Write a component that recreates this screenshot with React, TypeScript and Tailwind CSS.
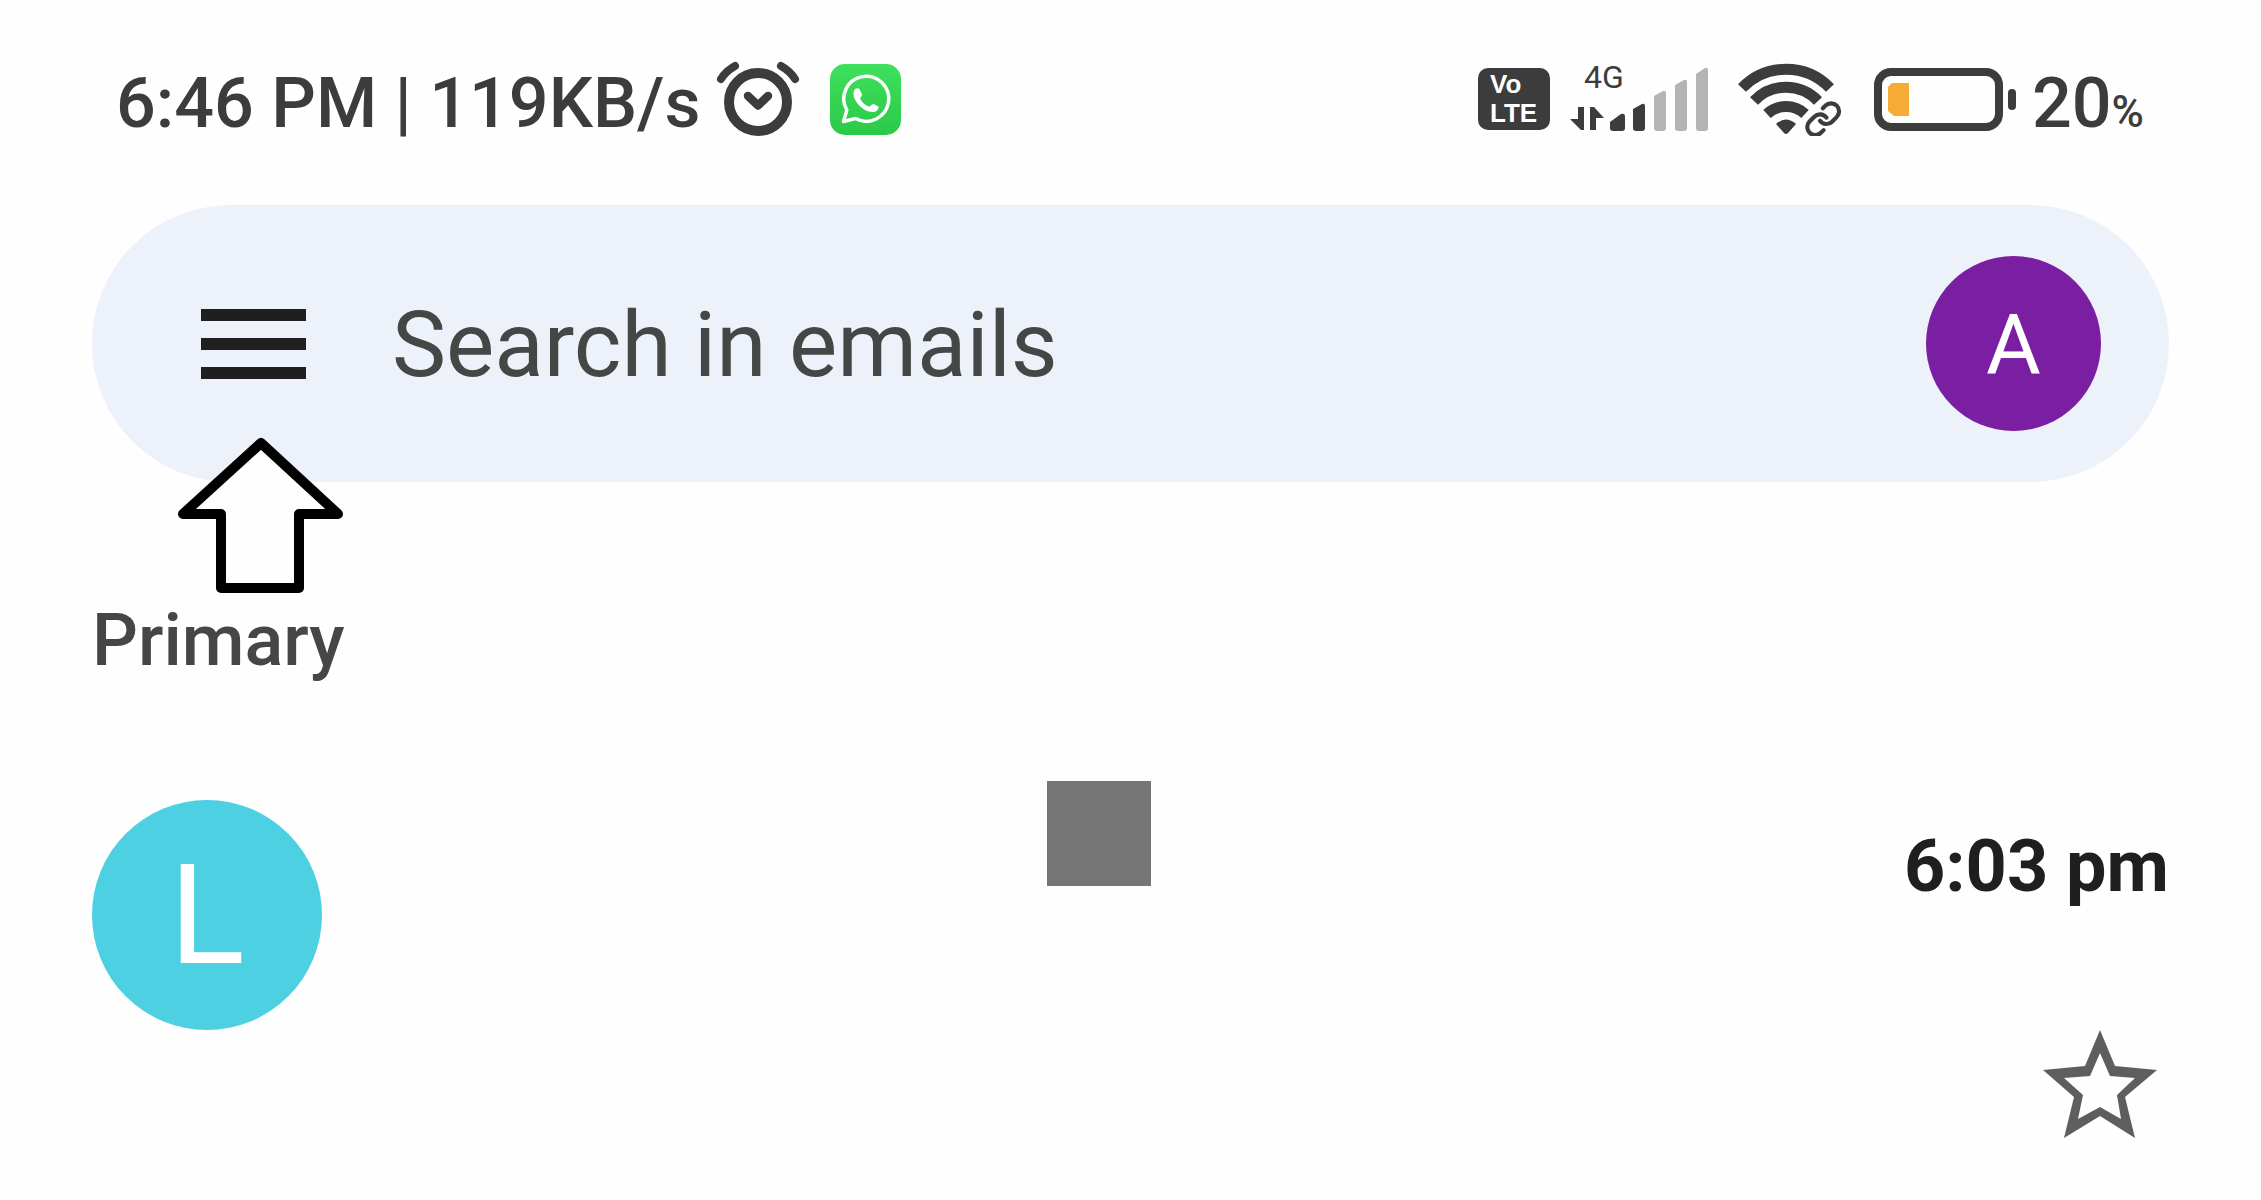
import React from 'react';

const AlarmIcon: React.FC = () => (
  <svg width="84" height="76" viewBox="0 0 84 76" fill="none" stroke="#3c3c3c" aria-hidden="true">
    <circle cx="42" cy="41" r="29" strokeWidth="10" />
    <path d="M32 35 L42 44.500 L52 35" strokeWidth="8.500" strokeLinecap="round" strokeLinejoin="round" />
    <path d="M5 18 Q10 10 19 5" strokeWidth="8" strokeLinecap="round" />
    <path d="M65 5 Q74 10 79 18" strokeWidth="8" strokeLinecap="round" />
  </svg>
);

const WhatsAppIcon: React.FC = () => (
  <svg width="71" height="71" viewBox="0 0 71 71" aria-hidden="true">
    <defs>
      <linearGradient id="wa" x1="0" y1="0" x2="0" y2="1">
        <stop offset="0" stopColor="#3ee05c" />
        <stop offset="1" stopColor="#2bc948" />
      </linearGradient>
    </defs>
    <rect width="71" height="71" rx="15" fill="url(#wa)" />
    <path
      d="M13.500 57.500 L16.800 46 A22.500 22.500 0 1 1 25.500 54.500 Z"
      fill="none"
      stroke="#fff"
      strokeWidth="3.500"
      strokeLinejoin="round"
    />
    <path
      d="M24 26.500 C25 24 28 23.500 29.500 25 L32 30.500 C32.500 32 30 33.500 30 34.500 C32 38.500 35 41 39 42.500 C40.500 42.500 42 39.500 43.500 40 L48.500 42.500 C49 46 46 48 42.500 48 C33 48 23 37 23.500 29 Z"
      fill="#fff"
    />
  </svg>
);

const SignalIcon: React.FC = () => (
  <svg width="140" height="64" viewBox="0 0 140 64" aria-hidden="true">
    <g fill="#3c3c3c">
      <path d="M8 40 H14 V63 H11 L0 52 H8 Z" />
      <path d="M20 63 V40 H24 L34 51 H26 V63 Z" />
      <path d="M40 55 L51 47 Q55 46 55 50 V61 Q55 64 52 64 H43 Q40 64 40 61 Z" />
      <path d="M63 42 L72 37 Q75 36 75 39 V61 Q75 64 72 64 H66 Q63 64 63 61 Z" />
    </g>
    <g fill="#b4b4b4">
      <path d="M84 29 L93 24 Q96 23 96 26 V61 Q96 64 93 64 H87 Q84 64 84 61 Z" />
      <path d="M105 18 L114 13 Q117 12 117 15 V61 Q117 64 114 64 H108 Q105 64 105 61 Z" />
      <path d="M126 7 L135 1 Q138 0 138 3 V61 Q138 64 135 64 H129 Q126 64 126 61 Z" />
    </g>
  </svg>
);

const WifiIcon: React.FC = () => (
  <svg width="104" height="74" viewBox="0 0 104 74" fill="none" stroke="#3c3c3c" aria-hidden="true">
    <g strokeWidth="11">
      <path d="M4 26 A61 61 0 0 1 92 26" />
      <path d="M16 39 A44 44 0 0 1 80 39" />
      <path d="M29 52 A28 28 0 0 1 67 52" />
    </g>
    <path d="M38 62 Q48 53 58 62 L50 71 Q48 73 46 71 Z" fill="#3c3c3c" stroke="none" />
    <g transform="translate(66 38) scale(1.6)" strokeWidth="2.600" strokeLinecap="round">
      <path d="M10 13a5 5 0 0 0 7.540.540l3-3a5 5 0 0 0-7.070-7.070l-1.720 1.710" />
      <path d="M14 11a5 5 0 0 0-7.540-.540l-3 3a5 5 0 0 0 7.070 7.070l1.710-1.710" />
    </g>
  </svg>
);

const BatteryIcon: React.FC = () => (
  <svg width="142" height="63" viewBox="0 0 142 63" aria-hidden="true">
    <rect x="4" y="4" width="121" height="55" rx="13" fill="none" stroke="#3c3c3c" strokeWidth="8" />
    <rect x="134" y="21" width="8" height="21" rx="4" fill="#3c3c3c" />
    <path d="M18 15 H35 V48 H20 L14 43 V19 Z" fill="#f5ac34" />
  </svg>
);

const UpArrow: React.FC = () => (
  <svg
    className="pointer-events-none absolute top-[228px] left-[84px]"
    width="170"
    height="164"
    viewBox="0 0 170 164"
    aria-hidden="true"
  >
    <path
      d="M85 10 L7 81 H45 V155 H123 V81 H162 Z"
      fill="#fefefe"
      stroke="#000"
      strokeWidth="10"
      strokeLinejoin="round"
    />
  </svg>
);

const StatusBar: React.FC = () => (
  <header className="flex h-[205px] items-start justify-between pt-[58px] pr-[25px] pl-[24px] text-[#3c3c3c]">
    <div className="flex h-[82px] items-center">
      <span className="pt-2 text-[70px] leading-[82px] font-medium whitespace-nowrap">6:46 PM | 119KB/s</span>
      <span className="ml-4"><AlarmIcon /></span>
      <span className="ml-[30px]"><WhatsAppIcon /></span>
    </div>
    <div className="flex h-[82px] items-center">
      <div className="flex h-[62px] w-[72px] flex-col justify-center rounded-[10px] bg-[#3c3c3c] pl-3 font-['Liberation_Sans',sans-serif] text-[26px] leading-[29px] font-bold text-white">
        <span>Vo</span>
        <span>LTE</span>
      </div>
      <div className="relative ml-5">
        <SignalIcon />
        <span className="absolute -top-2 left-3.5 text-[32px] leading-[36px]">4G</span>
      </div>
      <span className="ml-7"><WifiIcon /></span>
      <span className="ml-8"><BatteryIcon /></span>
      <span className="ml-4 pt-2 text-[70px] leading-[82px] font-medium">
        20<span className="text-[44px] leading-none">%</span>
      </span>
    </div>
  </header>
);

const SearchBar: React.FC = () => (
  <div className="relative flex h-[277px] items-center rounded-full bg-[#edf1fa] pr-[68px] pl-[109px]">
    <button type="button" aria-label="Open menu" className="flex w-[105px] flex-col gap-[17px]">
      <span className="h-3 w-full bg-[#1f1f1f]" />
      <span className="h-3 w-full bg-[#1f1f1f]" />
      <span className="h-3 w-full bg-[#1f1f1f]" />
    </button>
    <input
      type="text"
      aria-label="Search in emails"
      placeholder="Search in emails"
      className="ml-[86px] h-[120px] min-w-0 flex-1 bg-transparent pt-1 text-[91px] text-[#444746] outline-none placeholder:text-[#444746] placeholder:opacity-100"
    />
    <button
      type="button"
      aria-label="Account"
      className="flex size-[175px] items-center justify-center rounded-full bg-[#7b1fa2] pt-1 text-[84px] leading-none text-white"
    >
      A
    </button>
    <UpArrow />
  </div>
);

const EmailRow: React.FC = () => (
  <article className="mt-[98px] flex items-start">
    <div className="mt-[19px] flex size-[230px] shrink-0 items-center justify-center rounded-full bg-[#4dd0e1] text-[140px] leading-none text-white">
      L
    </div>
    <div className="ml-[98px] grid h-[210px] w-[731px] grid-cols-7 grid-rows-2">
      <span className="col-start-1 row-start-1 bg-[#fdfdfd]" />
      <span className="col-start-6 row-start-2 bg-[#fdfdfd]" />
      <span className="col-start-7 row-start-1 bg-[#757575]" />
    </div>
    <div className="ml-auto flex flex-col items-end">
      <time className="mt-[44px] text-[72px] leading-[84px] font-bold text-[#1f1f1f]">6:03 pm</time>
      <button type="button" aria-label="Star" className="mt-[121px] mr-3">
        <svg width="114" height="108" viewBox="0 0 114 108" aria-hidden="true">
          <path
            fillRule="evenodd"
            fill="#5e5e5e"
            d="M57 0 L72 36 L114 40 L82 67 L92 108 L57 86 L21 108 L31 67 L0 40 L42 36 Z M57 23 L47 46 L21 48 L40 65 L35 89 L57 77 L78 89 L74 65 L92 48 L67 46 Z"
          />
        </svg>
      </button>
    </div>
  </article>
);

const App: React.FC = () => {
  return (
    <main className="min-h-screen bg-[#fefefe] px-[92px] font-['Roboto',sans-serif]">
      <StatusBar />
      <SearchBar />
      <h2 className="mt-[117px] text-[72px] leading-[84px] font-medium text-[#444746]">Primary</h2>
      <EmailRow />
    </main>
  );
};

export default App;
